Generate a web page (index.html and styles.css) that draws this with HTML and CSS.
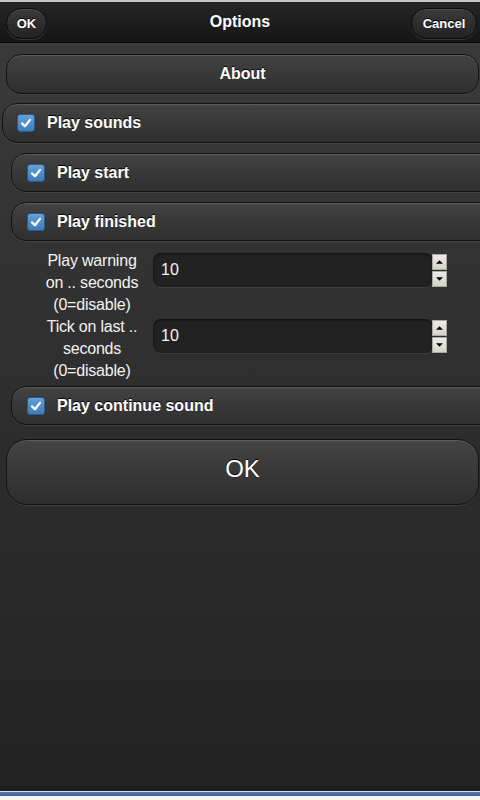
FILE: index.html
```html
<!DOCTYPE html>
<html lang="en">
<head>
    <meta charset="UTF-8">
    <meta name="viewport" content="width=device-width, initial-scale=1.0">
    <title>Options</title>
    <link rel="stylesheet" href="styles.css">
</head>
<body>
    <div class="page">
        <div class="header">
            <button class="hdr-btn hdr-ok">OK</button>
            <h1>Options</h1>
            <button class="hdr-btn hdr-cancel">Cancel</button>
        </div>

        <div class="content">
            <button class="row about">About</button>

            <label class="row check main">
                <span class="box"><svg viewBox="0 0 18 18"><path d="M4.5 9.5 L7.8 12.6 L13.5 5.5" /></svg></span>
                Play sounds
            </label>

            <label class="row check sub">
                <span class="box"><svg viewBox="0 0 18 18"><path d="M4.5 9.5 L7.8 12.6 L13.5 5.5" /></svg></span>
                Play start
            </label>

            <label class="row check sub">
                <span class="box"><svg viewBox="0 0 18 18"><path d="M4.5 9.5 L7.8 12.6 L13.5 5.5" /></svg></span>
                Play finished
            </label>

            <div class="field">
                <div class="field-label">Play warning<br>on .. seconds<br>(0=disable)</div>
                <div class="number">
                    <div class="number-input">10</div>
                    <div class="spin">
                        <span class="spin-btn"><svg viewBox="0 0 15 16"><path d="M3.5 10 L7.5 6 L11.5 10 Z" /></svg></span>
                        <span class="spin-btn"><svg viewBox="0 0 15 16"><path d="M3.5 6 L7.5 10 L11.5 6 Z" /></svg></span>
                    </div>
                </div>
            </div>

            <div class="field">
                <div class="field-label">Tick on last ..<br>seconds<br>(0=disable)</div>
                <div class="number">
                    <div class="number-input">10</div>
                    <div class="spin">
                        <span class="spin-btn"><svg viewBox="0 0 15 16"><path d="M3.5 10 L7.5 6 L11.5 10 Z" /></svg></span>
                        <span class="spin-btn"><svg viewBox="0 0 15 16"><path d="M3.5 6 L7.5 10 L11.5 6 Z" /></svg></span>
                    </div>
                </div>
            </div>

            <label class="row check sub last">
                <span class="box"><svg viewBox="0 0 18 18"><path d="M4.5 9.5 L7.8 12.6 L13.5 5.5" /></svg></span>
                Play continue sound
            </label>

            <button class="big-ok">OK</button>
        </div>
    </div>
    <div class="taskbar"></div>
</body>
</html>
```

FILE: styles.css
```css
* {
    margin: 0;
    padding: 0;
    box-sizing: border-box;
}

body {
    font-family: "Liberation Sans", Arial, sans-serif;
    width: 480px;
    height: 800px;
    overflow: hidden;
    background: #232323;
    color: white;
}

.page {
    height: 786px;
    border-top: 2px solid #c8c8c8;
    background: linear-gradient(to bottom, #3b3b3b 0%, #2e2e2e 50%, #232323 100%);
    overflow: hidden;
}

/* header bar */
.header {
    height: 41px;
    display: flex;
    align-items: center;
    justify-content: space-between;
    padding: 0 3px 0 6px;
    background: linear-gradient(to bottom, #262626 0%, #151515 100%);
    border-bottom: 1px solid #0c0c0c;
    position: relative;
}

.header h1 {
    position: absolute;
    left: 0;
    right: 0;
    top: 11px;
    text-align: center;
    font-size: 16px;
    font-weight: bold;
    pointer-events: none;
}

.hdr-btn {
    height: 31px;
    margin-top: 2px;
    border-radius: 16px;
    border: 1px solid #0a0a0a;
    background: linear-gradient(to bottom, #3a3a3a 0%, #222 100%);
    box-shadow: inset 0 1px 0 rgba(255, 255, 255, 0.12), 0 1px 0 rgba(255, 255, 255, 0.15);
    color: white;
    font-family: inherit;
    font-size: 13px;
    font-weight: bold;
    text-shadow: 0 -1px 0 #000;
}

.hdr-ok {
    width: 41px;
}

.hdr-cancel {
    width: 66px;
}

/* rows */
.content {
    display: flex;
    flex-direction: column;
    padding-top: 11px;
}

.row {
    height: 40px;
    border: 1px solid #121212;
    border-radius: 15px;
    background: linear-gradient(to bottom, #434343 0%, #383838 50%, #2f2f2f 100%);
    box-shadow: inset 0 1px 0 rgba(255, 255, 255, 0.13), 0 1px 0 rgba(255, 255, 255, 0.08);
    color: white;
    font-family: inherit;
    font-size: 16px;
    font-weight: bold;
    text-shadow: 0 -1px 0 #000;
}

.about {
    margin-left: 6px;
    width: 473px;
}

.check {
    display: flex;
    align-items: center;
    gap: 12px;
    margin-top: 9px;
}

.check.main {
    margin-left: 2px;
    width: 495px;
    padding-left: 14px;
}

.check.sub {
    height: 39px;
    margin-left: 11px;
    width: 490px;
    padding-left: 15px;
    margin-top: 10px;
}

.check.last {
    margin-top: 4px;
}

.box {
    width: 18px;
    height: 18px;
    border-radius: 3px;
    background: linear-gradient(to bottom, #65a0d6 0%, #3d7bb9 100%);
    border: 1px solid #2c5c8e;
    box-shadow: 0 0 1px rgba(0, 0, 0, 0.5);
    display: flex;
}

.box svg {
    width: 16px;
    height: 16px;
}

.box path {
    fill: none;
    stroke: white;
    stroke-width: 2.6;
    stroke-linecap: round;
    stroke-linejoin: round;
}

/* number fields */
.field {
    display: flex;
    align-items: flex-start;
    height: 66px;
}

.field:first-of-type {
    margin-top: 9px;
}

.field-label {
    width: 104px;
    margin-left: 40px;
    text-align: center;
    font-size: 16px;
    line-height: 22px;
    letter-spacing: -0.2px;
    color: #f2f2f2;
}

.number {
    display: flex;
    margin-left: 9px;
    margin-top: 3px;
}

.number-input {
    width: 280px;
    height: 34px;
    background: #222;
    border-radius: 8px;
    box-shadow: inset 0 1px 3px rgba(0, 0, 0, 0.6), 0 1px 0 rgba(255, 255, 255, 0.06);
    padding: 8px 0 0 8px;
    font-size: 16px;
    color: #f4f4f4;
}

.spin {
    display: flex;
    flex-direction: column;
    gap: 1px;
    margin-top: 1px;
    margin-left: -1px;
}

.spin-btn {
    width: 15px;
    height: 16px;
    background: linear-gradient(to bottom, #ecebe6 0%, #d4d3cc 100%);
    border: 1px solid #a9a8a2;
    display: block;
}

.spin-btn svg {
    display: block;
    width: 13px;
    height: 14px;
}

.spin-btn path {
    fill: #000;
}

/* bottom button */
.big-ok {
    margin: 14px 0 0 6px;
    width: 473px;
    height: 66px;
    border: 1px solid #121212;
    border-radius: 21px;
    background: linear-gradient(to bottom, #444 0%, #383838 50%, #2e2e2e 100%);
    box-shadow: inset 0 1px 0 rgba(255, 255, 255, 0.13), 0 1px 0 rgba(255, 255, 255, 0.08);
    color: white;
    font-family: inherit;
    font-size: 24px;
    padding-bottom: 6px;
    text-shadow: 0 -1px 0 #000;
}

.taskbar {
    height: 14px;
    background: linear-gradient(to bottom, #1e1d22 0px, #1e1d22 5px, #dcdcee 5px, #dcdcee 6px, #5a7aa5 6px, #3e5f8c 10px, #f8f7f2 10px);
}
```
